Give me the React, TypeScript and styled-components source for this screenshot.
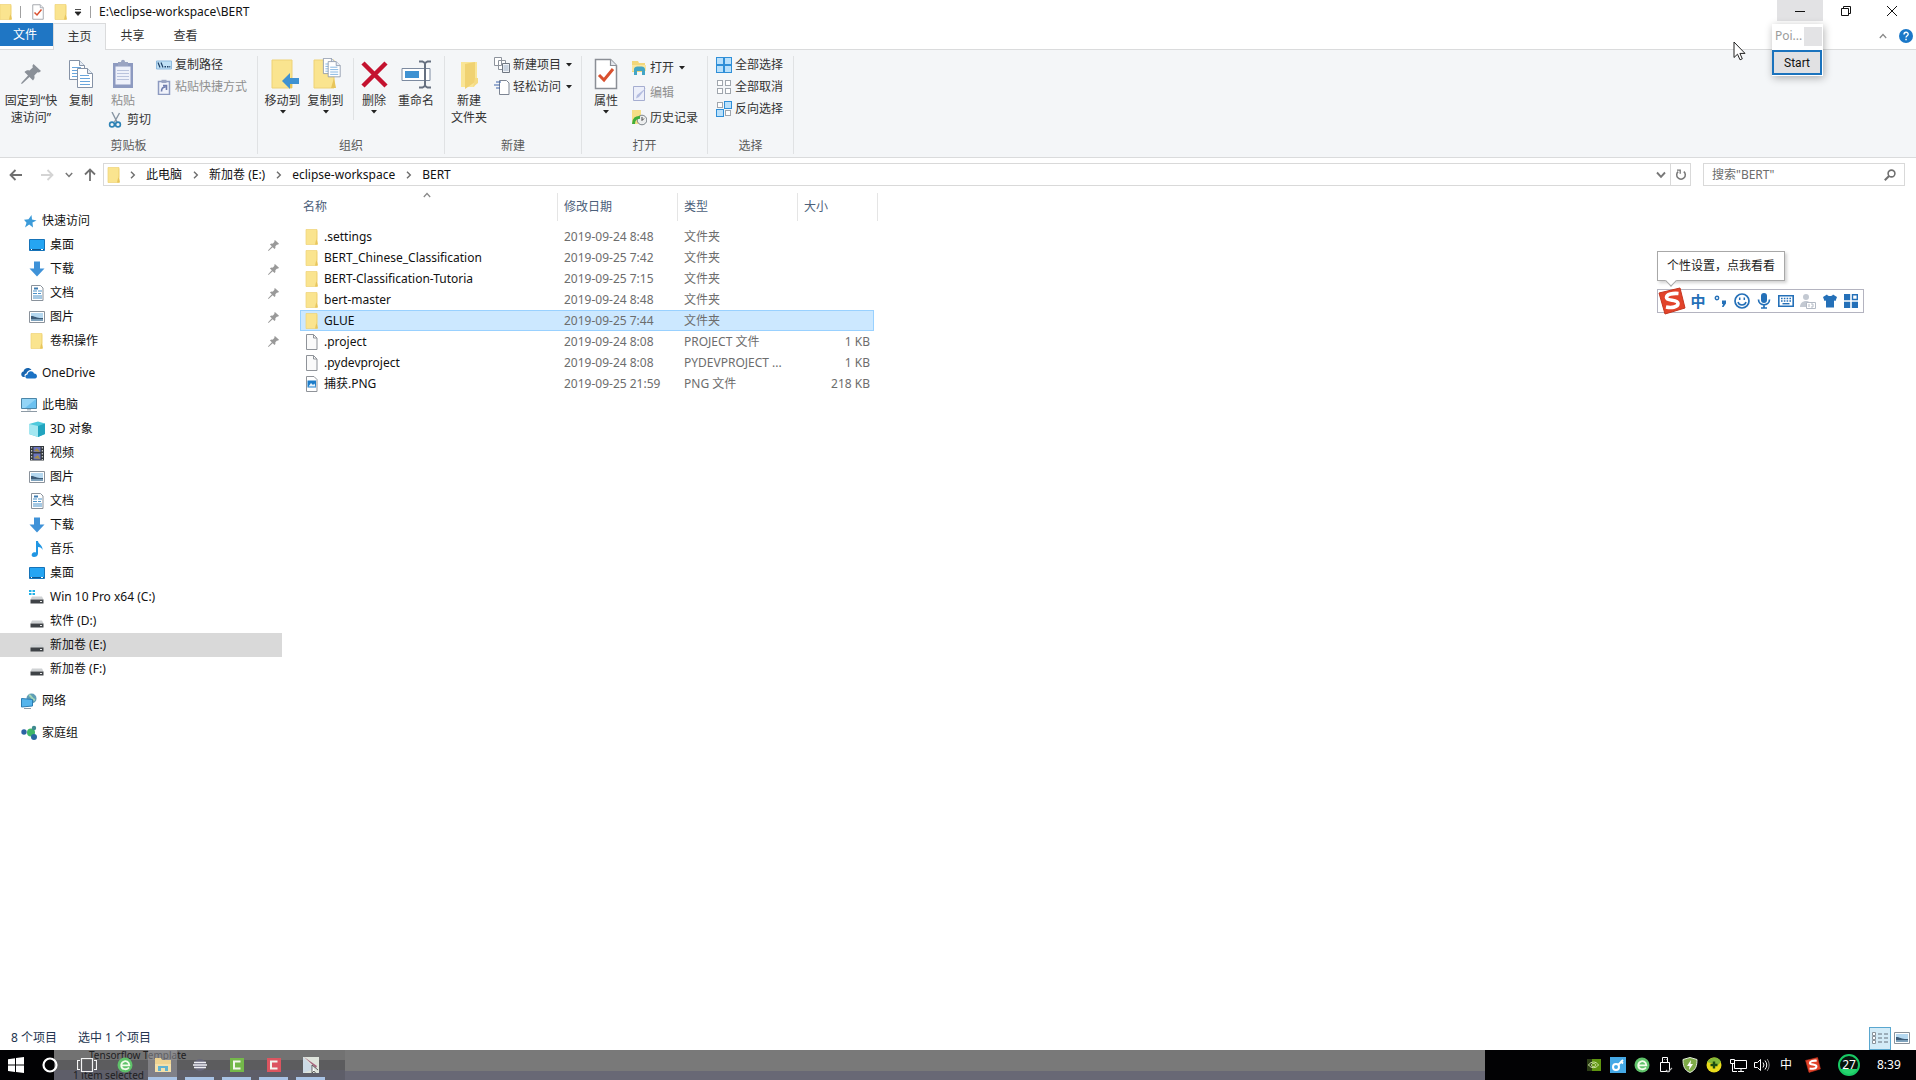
import React from "react";
import styled, { createGlobalStyle, css } from "styled-components";

const Global = createGlobalStyle`
  *, *::before, *::after { box-sizing: border-box; }
  body { margin: 0; background: #fff; }
  body, button, input {
    font-family: "Noto Sans", "Noto Sans CJK SC", sans-serif;
    font-size: 12px;
    line-height: 16px;
    color: #1a1a1a;
  }
  button { border: 0; padding: 0; margin: 0; background: none; }
  svg { display: block; flex: none; }
`;

/* ---------- icons ---------- */

type IconProps = { size?: number };

const Folder = ({ size = 16 }: IconProps) => (
  <svg width={size} height={size} viewBox="0 0 16 16">
    <path d="M2 .5h11v15H2z" fill="#fae48f" />
    <path d="M2 .5h11v15H2z" fill="none" stroke="#eed277" strokeWidth=".7" />
    <path d="M12.500 9l1.500 6.500H11z" fill="#e8c55a" />
    <path d="M12.300 1.500h1v9l-1 1z" fill="#f3d879" />
  </svg>
);

const CheckDoc = ({ size = 16 }: IconProps) => (
  <svg width={size} height={size} viewBox="0 0 32 32">
    <path d="M5.500 1.500h15l6 6v23h-21z" fill="#fff" stroke="#8b8f96" strokeWidth="1.500" />
    <path d="M20.500 1.500v6h6" fill="#e4e8ee" stroke="#8b8f96" strokeWidth="1.200" />
    <path d="M9 17l5 5 9-11" fill="none" stroke="#d9502f" strokeWidth="3" />
  </svg>
);

const Pin = ({ size = 11, color = "#8a9098" }: IconProps & { color?: string }) => (
  <svg width={size} height={size} viewBox="0 0 20 20">
    <path d="M12.500 0L20 7l-2 1.500-1.500-.3-3.200 3.300c.6 2 .2 3.500-1.300 5L8.500 13 1.500 19.500 0 20l.6-1.600L7 11.500 3.500 8c1.500-1.500 3-2 5-1.400l3.300-3.200-.4-1.700z" fill={color} />
  </svg>
);

const Sheet = ({ x, y }: { x: number; y: number }) => (
  <g transform={`translate(${x} ${y})`}>
    <path d="M.5.5h10l5 5v14H.5z" fill="#fff" stroke="#8592a6" />
    <path d="M10.500.5v5h5" fill="#e4ebf4" stroke="#8592a6" />
    <path d="M3 7.500h9M3 10.500h10M3 13.500h10M3 16.500h10" stroke="#6aa6dc" />
  </g>
);

const CopyIcon = () => (
  <svg width="32" height="32" viewBox="0 0 32 32">
    <Sheet x={4} y={2} />
    <Sheet x={12} y={10} />
  </svg>
);

const PasteIcon = () => (
  <svg width="32" height="32" viewBox="0 0 32 32">
    <path d="M6 5h20v25H6z" fill="#8d9ac0" />
    <path d="M8.500 8.500h15v18h-15z" fill="#eef1fa" />
    <path d="M10 12.500h12M10 15.500h12M10 18.500h12M10 21.500h12" stroke="#b9c3dd" />
    <path d="M11 4h3c0-3 4-3 4 0h3v4H11z" fill="#9aa4c2" />
  </svg>
);

const PathIcon = () => (
  <svg width="16" height="16" viewBox="0 0 16 16">
    <path d="M.5 4h15v8H.5z" fill="#bfe0f5" stroke="#8fbbe0" />
    <path d="M2 5.500l2 5M5 5.500l2 5" stroke="#1d3f66" strokeWidth="1.200" />
    <path d="M8.500 9h1.500v1.500H8.500zM11 9h1.500v1.500H11zM13.300 9h1v1.500h-1z" fill="#1d3f66" />
  </svg>
);

const PasteLinkIcon = () => (
  <svg width="16" height="16" viewBox="0 0 16 16">
    <path d="M2.500 2.500h11v13h-11z" fill="#f1f3fb" stroke="#8d9ac0" strokeWidth="1.500" />
    <path d="M5.500.8h5V4h-5z" fill="#9aa4c2" />
    <path d="M5.500 12.500c0-3 1.500-4.500 4-4.500M7 6.500h3.500V11" fill="none" stroke="#6f7dae" strokeWidth="1.600" />
  </svg>
);

const Scissors = () => (
  <svg width="16" height="16" viewBox="0 0 16 16">
    <path d="M4 0l5 10M11.500 1L6.500 10" stroke="#8795a3" strokeWidth="1.400" />
    <circle cx="4" cy="12.500" r="2.400" fill="none" stroke="#2d82b5" strokeWidth="1.600" />
    <circle cx="10" cy="12.500" r="2.400" fill="none" stroke="#2d82b5" strokeWidth="1.600" />
  </svg>
);

const MoveTo = () => (
  <svg width="32" height="32" viewBox="0 0 32 32">
    <path d="M5 2h20v28H5z" fill="#fae48f" stroke="#eed277" />
    <path d="M25 18v12h-3z" fill="#e8c55a" />
    <path d="M15 23l8-8v5h9v6h-9v5z" fill="#3f92d2" />
  </svg>
);

const CopyTo = () => (
  <svg width="32" height="32" viewBox="0 0 32 32">
    <path d="M4 2h20v28H4z" fill="#fae48f" stroke="#eed277" />
    <path d="M24 20l2 10h-5z" fill="#e8c55a" />
    <g transform="translate(13 0) scale(.8)">
      <Sheet x={0} y={0} />
      <Sheet x={6} y={4} />
    </g>
  </svg>
);

const DeleteX = () => (
  <svg width="32" height="32" viewBox="0 0 32 32">
    <path d="M5 5l23 23M28 5L5 28" stroke="#c4122f" strokeWidth="4.500" />
  </svg>
);

const Rename = () => (
  <svg width="32" height="32" viewBox="0 0 32 32">
    <path d="M2 10.500h28v12H2z" fill="#fff" stroke="#7c8aa0" />
    <path d="M5 13h14v7H5z" fill="#3f92d2" />
    <path d="M19 3.500h3.500L25 5l2.500-1.500H31M19 29.500h3.500L25 28l2.500 1.500H31M25 5v23" fill="none" stroke="#667080" strokeWidth="2" />
  </svg>
);

const NewFolder = () => (
  <svg width="32" height="32" viewBox="0 0 32 32">
    <path d="M8 4h16v20l-3 5H8z" fill="#f9e596" />
    <path d="M12 6l10-2v20l-10 7z" fill="#f0d272" />
    <path d="M22 20h3v5l-5 4z" fill="#f5db83" />
  </svg>
);

const NewItem = () => (
  <svg width="16" height="16" viewBox="0 0 16 16">
    <path d="M.5.500h7v8h-7zM4.500 3.500h7v9h-7z" fill="#fff" stroke="#8d939c" />
    <path d="M8.500 6.500h7v9h-7z" fill="#f0f3f7" stroke="#6f7782" />
    <path d="M9.500 9h5M9.500 11h5M9.500 13h5" stroke="#9fb0c6" />
  </svg>
);

const EasyAccess = () => (
  <svg width="16" height="16" viewBox="0 0 16 16">
    <path d="M5.500 1.500h7l2.500 2.500v11.500H5.500z" fill="#fff" stroke="#7d8593" />
    <path d="M2 3h5M0 6h6M2 9h4" stroke="#3c63a8" strokeWidth="1.200" />
  </svg>
);

const OpenIcon = () => (
  <svg width="16" height="16" viewBox="0 0 16 16">
    <path d="M1 1h6l1 2h6v9H1z" fill="#f3d77b" />
    <path d="M1 5h14v6H1z" fill="#f9e6a0" />
    <path d="M3 15V9.500C3 7 5 6.500 8.500 6.500S14 7 14 9.500V15h-3v-4H6v4z" fill="#43a5c5" />
  </svg>
);

const EditIcon = () => (
  <svg width="16" height="16" viewBox="0 0 16 16">
    <path d="M2.500 1.500h11v14h-11z" fill="#eceffa" stroke="#a5add0" />
    <path d="M15 3l-7 9-3 1.500L6 10z" fill="#b4bde0" />
  </svg>
);

const HistoryIcon = () => (
  <svg width="16" height="16" viewBox="0 0 16 16">
    <path d="M1 0h9v14H1z" fill="#f6df86" />
    <circle cx="11" cy="10" r="4.800" fill="#eceeef" stroke="#7e868c" />
    <path d="M11 7v3.500l2-2" fill="none" stroke="#444" />
    <path d="M2.500 14c0-5 3-7 6.500-6.500" fill="none" stroke="#3fae3c" strokeWidth="3" />
  </svg>
);

const squares = [[0.5, 0.5], [8.5, 0.5], [0.5, 8.5], [8.5, 8.5]];
const SelectIcon = ({ filled }: { filled: number[] }) => (
  <svg width="16" height="16" viewBox="0 0 16 16">
    {squares.map(([x, y], i) => {
      const on = filled.includes(i);
      return (
        <rect
          key={i}
          x={on ? x : x + 1}
          y={on ? y : y + 1}
          width={on ? 7 : 5}
          height={on ? 7 : 5}
          fill={on ? "#b9e0fb" : "#fff"}
          stroke={on ? "#2f8fd8" : "#a0a6ad"}
        />
      );
    })}
  </svg>
);

const Star = () => (
  <svg width="16" height="16" viewBox="0 0 16 16">
    <path d="M10.500 2l.5 4.500 4.500 1-4 2 .5 5-3.800-3L4 14.500l1.500-4.700L3 6.800l4.500-.5z" fill="#3c9bd9" />
  </svg>
);

const Desktop = () => (
  <svg width="16" height="16" viewBox="0 0 16 16">
    <path d="M.5 2.500h15v11H.5z" fill="#25a5f3" stroke="#1673b8" />
    <path d="M1 12.500h14" stroke="#0e568f" />
    <path d="M2 12h1v1H2zM12 12h2v1h-2z" fill="#fff" />
  </svg>
);

const Download = () => (
  <svg width="16" height="16" viewBox="0 0 16 16">
    <path d="M5 .5h6v7h4.500L8 15.500.5 7.500H5z" fill="#3f92d8" />
  </svg>
);

const DocIcon = () => (
  <svg width="16" height="16" viewBox="0 0 16 16">
    <path d="M2.500.5h9l2.500 2.500v12.500H2.500z" fill="#fff" stroke="#8a929b" />
    <path d="M4 6h4M9 6h4M4 8.500h4M9 8.500h3M4 11h9M4 13h9" stroke="#4d93c9" />
    <path d="M5 3.500h4" stroke="#3f7cb0" strokeWidth="2" />
  </svg>
);

const PictureIcon = () => (
  <svg width="16" height="16" viewBox="0 0 16 16">
    <path d="M.5 2.500h15v11H.5z" fill="#fff" stroke="#8a929b" />
    <path d="M2 4h12v8H2z" fill="#b5d8f0" />
    <path d="M2 7c4 0 6 2.500 12 2v1.500H2z" fill="#3d5c78" />
    <path d="M2 10.500h12V12H2z" fill="#7fa3bd" />
  </svg>
);

const Cloud = () => (
  <svg width="16" height="16" viewBox="0 0 16 16">
    <path d="M2.500 12C-.5 11.500-.5 7 2.500 6.500 3 3 8 1.500 10.500 5 7 5 6 7 5.500 8.500 3.500 9 3 10.500 4 12z" fill="#1764ae" />
    <path d="M6 13.500c-2.500-.5-2-4 .5-4 .5-4 5.500-4 6.500-1 3.500 0 4 4.500 1 5z" fill="#1b72c4" />
  </svg>
);

const Computer = () => (
  <svg width="16" height="16" viewBox="0 0 16 16">
    <path d="M.5 1.500h15v10H.5z" fill="#6cc1f0" stroke="#4c86a8" />
    <path d="M1 2h14L4 11H1z" fill="#93d5f7" />
    <path d="M0 14.500h16" stroke="#8d9aa5" />
    <path d="M6 12h4v1.500H6z" fill="#b9c4cc" />
  </svg>
);

const Cube = () => (
  <svg width="16" height="16" viewBox="0 0 16 16">
    <path d="M0 3l9-2.500 7 2V13l-7 3-9-3z" fill="#4fc9dc" />
    <path d="M0 3l9 2v11l-9-3z" fill="#a4e7f1" />
    <path d="M9 5l7-2.500V13l-7 3z" fill="#22a4bf" />
  </svg>
);

const Film = () => (
  <svg width="16" height="16" viewBox="0 0 16 16">
    <path d="M1 1h14v14.500H1z" fill="#33383d" />
    <path d="M4.500 2h7v5h-7zM4.500 8.500h7v6h-7z" fill="#6b75c0" />
    <path d="M5 6l3-3 3 4zM5 13l4-3 2 4z" fill="#a58e48" />
    <path d="M2.700 2v13M13.300 2v13" stroke="#e6e8ea" strokeDasharray="1.500 1.500" />
  </svg>
);

const Music = () => (
  <svg width="16" height="16" viewBox="0 0 16 16">
    <path d="M7 0h2c0 3 5 4 4.500 9-.7-2-2-3-4.500-3v6.500C9 15 7 16 5 16s-3-1.500-2-3.200S6 11 7 11.500z" fill="#2196e3" />
  </svg>
);

const Drive = ({ win }: { win?: boolean }) => (
  <svg width="16" height="16" viewBox="0 0 16 16">
    <path d="M3 7.500h10l1.500 3h-13z" fill="#cfd2d4" />
    <path d="M1.500 10.500h13v4h-13z" fill="#3f4347" />
    <path d="M11 12h2v1h-2z" fill="#e9e9e9" />
    {win && <path d="M0 1h2.500v2H0zM3.500 1H6v2H3.500zM0 4h2.500v2H0zM3.500 4H6v2H3.500z" fill="#23b2e8" />}
  </svg>
);

const Network = () => (
  <svg width="16" height="16" viewBox="0 0 16 16">
    <circle cx="10.500" cy="5.500" r="5" fill="#5e9db5" />
    <path d="M8 2c3 1 2 4 6 5" stroke="#a4d6b5" strokeWidth="2" fill="none" />
    <path d="M.5 5.500l11 1v6.500l-11 1z" fill="#54b4ec" stroke="#2c7db3" />
    <path d="M3 15.500h7" stroke="#8d9aa5" />
  </svg>
);

const HomeGroup = () => (
  <svg width="16" height="16" viewBox="0 0 16 16">
    <circle cx="3" cy="7" r="2.700" fill="#2b63a3" />
    <circle cx="10" cy="7.500" r="4" fill="#3fb768" />
    <circle cx="13" cy="3" r="2.200" fill="#3f8a8f" />
    <circle cx="13" cy="12" r="3" fill="#2a69a0" />
  </svg>
);

const BlankFile = () => (
  <svg width="16" height="16" viewBox="0 0 16 16">
    <path d="M2.500.5h7l3.500 3.500v11.500H2.500z" fill="#fafafa" stroke="#8f9399" />
    <path d="M9.500.5V4H13" fill="none" stroke="#8f9399" />
  </svg>
);

const ImageFile = () => (
  <svg width="16" height="16" viewBox="0 0 16 16">
    <path d="M2.500.5h7.500l3 3v12h-10.500z" fill="#fff" stroke="#8f9399" />
    <path d="M3.500 4.500h8.500v7H3.500z" fill="#1c7cc9" />
    <path d="M4.500 10.500l2.500-3.500 2 2 1.500-1.500 1 3z" fill="#e4f2fc" />
  </svg>
);

const ChevronRight = () => (
  <svg width="6" height="8" viewBox="0 0 6 8">
    <path d="M1 .8L4.300 4 1 7.200" fill="none" stroke="#6d6d6d" strokeWidth="1.400" />
  </svg>
);

const ChevronDown = ({ size = 8 }: IconProps) => (
  <svg width={size} height={size} viewBox="0 0 8 8">
    <path d="M.8 2L4 5.500 7.200 2" fill="none" stroke="#777" strokeWidth="1.500" />
  </svg>
);

const ChevronUp = () => (
  <svg width="8" height="6" viewBox="0 0 8 6">
    <path d="M.8 5L4 1.500 7.200 5" fill="none" stroke="#888" strokeWidth="1.200" />
  </svg>
);

const Caret = () => (
  <svg width="6" height="4" viewBox="0 0 6 4">
    <path d="M0 0h6L3 3.500z" fill="#222" />
  </svg>
);

const Arrow = ({ turn = 0, color = "#707070" }: { turn?: number; color?: string }) => (
  <svg width="14" height="14" viewBox="0 0 14 14">
    <path
      transform={`rotate(${turn} 7 7)`}
      d="M13 7H1.800M6.500 2L1.500 7l5 5"
      fill="none"
      stroke={color}
      strokeWidth="1.800"
    />
  </svg>
);

const Refresh = () => (
  <svg width="12" height="12" viewBox="0 0 12 12">
    <path d="M8.800 2.600A4.300 4.300 0 1 1 3.200 2.600" fill="none" stroke="#777" strokeWidth="1.500" />
    <path d="M2 1.200h3.200v3.600" fill="none" stroke="#777" strokeWidth="1.300" />
  </svg>
);

const Magnifier = () => (
  <svg width="12" height="12" viewBox="0 0 12 12">
    <circle cx="7.500" cy="4.500" r="3.400" fill="none" stroke="#707070" strokeWidth="1.600" />
    <path d="M5 7L.8 11.200" stroke="#707070" strokeWidth="2" />
  </svg>
);

/* ---------- window frame ---------- */

const Window = styled.div`
  position: relative;
  display: flex;
  flex-direction: column;
  min-height: 100vh;
  overflow: hidden;
  background: #fff;
`;

const TitleBar = styled.header`
  display: flex;
  align-items: flex-start;
  height: 23px;
  padding-right: 1px;
`;

const QuickBar = styled.div`
  display: flex;
  align-items: center;
  height: 23px;
`;

const QuickButton = styled.button<{ $w: number }>`
  display: flex;
  justify-content: center;
  width: ${(p) => p.$w}px;
`;

const Tick = styled.span`
  width: 1px;
  height: 12px;
  margin: 0 8px;
  background: #a0a0a0;
`;

const Title = styled.h1`
  flex: 1;
  margin: 0;
  font-size: 12px;
  font-weight: 400;
  line-height: 23px;
  color: #111;
`;

const WindowButton = styled.button<{ $hover?: boolean }>`
  display: flex;
  align-items: center;
  justify-content: center;
  width: 46px;
  height: 21px;
  background: ${(p) => (p.$hover ? "#e2e2e4" : "transparent")};
`;

const TabBar = styled.nav`
  display: flex;
  align-items: stretch;
  height: 26px;
`;

const Tab = styled.button<{ $kind?: "file" | "active" }>`
  width: 53px;
  height: 26px;
  color: #333;
  ${(p) =>
    p.$kind === "file" &&
    css`
      height: 23px;
      padding-right: 3px;
      background: #1f76c4;
      color: #fff;
    `}
  ${(p) =>
    p.$kind === "active" &&
    css`
      height: 27px;
      background: #f4f6f8;
      border: 1px solid #dadbdc;
      border-bottom: 0;
      z-index: 1;
    `}
`;

const TabTools = styled.div`
  display: flex;
  align-items: center;
  gap: 12px;
  margin-left: auto;
  padding-right: 3px;
`;

/* ---------- ribbon ---------- */

const Ribbon = styled.section`
  display: flex;
  height: 109px;
  padding: 6px 0 3px;
  background: #f4f6f8;
  border-top: 1px solid #dadbdc;
  border-bottom: 1px solid #dadbdc;
`;

const Group = styled.section<{ $w: number }>`
  display: flex;
  flex-direction: column;
  justify-content: space-between;
  width: ${(p) => p.$w}px;
  border-right: 1px solid #e0e2e4;
`;

const GroupBody = styled.div<{ $indent?: number }>`
  display: flex;
  padding-left: ${(p) => p.$indent ?? 0}px;
`;

const GroupTitle = styled.h2`
  margin: 0;
  font-size: 12px;
  font-weight: 400;
  text-align: center;
  color: #5a5a5a;
`;

const BigButton = styled.button<{ $w: number; $off?: boolean }>`
  display: flex;
  flex-direction: column;
  align-items: center;
  width: ${(p) => p.$w}px;
  color: ${(p) => (p.$off ? "#8f8f8f" : "#333")};
  white-space: nowrap;
`;

const BigIcon = styled.span`
  display: flex;
  align-items: center;
  justify-content: center;
  height: 36px;
`;

const BigLabel = styled.span`
  padding-bottom: 1px;
  line-height: 17px;
`;

const Column = styled.div<{ $gap?: number; $top?: number; $indent?: number }>`
  display: flex;
  flex-direction: column;
  align-items: flex-start;
  gap: ${(p) => p.$gap ?? 0}px;
  padding: ${(p) => p.$top ?? 0}px 0 0 ${(p) => p.$indent ?? 0}px;
`;

const SmallButton = styled.button<{ $off?: boolean }>`
  display: flex;
  align-items: center;
  gap: 3px;
  height: 16px;
  color: ${(p) => (p.$off ? "#8f8f8f" : "#333")};
  white-space: nowrap;
  svg:last-child { margin-left: 2px; }
`;

const InnerRule = styled.span`
  width: 1px;
  height: 62px;
  margin: 2px 2px 0 6px;
  background: #e0e2e4;
`;

/* ---------- address bar ---------- */

const AddressRow = styled.div`
  display: flex;
  align-items: center;
  height: 34px;
  padding: 5px 11px 6px 9px;
`;

const NavButton = styled.button<{ $w: number }>`
  display: flex;
  align-items: center;
  width: ${(p) => p.$w}px;
`;

const AddressBox = styled.div`
  display: flex;
  flex: 1;
  align-items: center;
  height: 23px;
  margin-right: 12px;
  padding-left: 2px;
  border: 1px solid #d9d9d9;
`;

const Crumbs = styled.ol`
  display: flex;
  flex: 1;
  align-items: center;
  margin: 0;
  padding: 0 0 0 8px;
  list-style: none;
`;

const Crumb = styled.li`
  display: flex;
  align-items: center;
  gap: 10px;
  padding-right: 11px;
`;

const CrumbLink = styled.a`
  color: #111;
  text-decoration: none;
`;

const BoxButton = styled.button<{ $line?: boolean }>`
  display: flex;
  align-items: center;
  justify-content: center;
  width: 20px;
  height: 21px;
  border-left: 1px solid ${(p) => (p.$line ? "#d9d9d9" : "transparent")};
`;

const SearchBox = styled.label`
  display: flex;
  align-items: center;
  width: 202px;
  height: 23px;
  padding: 0 8px;
  border: 1px solid #d9d9d9;
`;

const SearchInput = styled.input`
  flex: 1;
  min-width: 0;
  padding: 0;
  border: 0;
  outline: 0;
  background: none;
  &::placeholder { color: #6d6d6d; opacity: 1; }
`;

/* ---------- content ---------- */

const Content = styled.div`
  display: flex;
  flex: 1;
`;

const Sidebar = styled.nav`
  width: 282px;
  padding-top: 17px;
`;

const Section = styled.div`
  margin-bottom: 8px;
`;

const SideRow = styled.a<{ $deep?: boolean; $on?: boolean }>`
  display: flex;
  align-items: center;
  gap: 5px;
  height: 24px;
  padding: 0 3px 0 ${(p) => (p.$deep ? 29 : 21)}px;
  background: ${(p) => (p.$on ? "#d9d9d9" : "transparent")};
  color: #111;
  text-decoration: none;
`;

const PinSlot = styled.span`
  margin-left: auto;
`;

const Main = styled.main`
  flex: 1;
  padding: 1px 0 0 18px;
`;

const FileTable = styled.table`
  width: 578px;
  border-collapse: separate;
  border-spacing: 0;
  table-layout: fixed;
`;

const Col = styled.col<{ $w: number }>`
  width: ${(p) => p.$w}px;
`;

const HeadCell = styled.th`
  position: relative;
  height: 28px;
  padding: 0 0 0 6px;
  border-right: 1px solid #e5e5e5;
  font-weight: 400;
  text-align: left;
  color: #4c607a;
  &:first-child { padding-left: 3px; }
`;

const SortMark = styled.span`
  position: absolute;
  top: -1px;
  left: calc(50% - 6px);
`;

const Cell = styled.td<{ $right?: boolean }>`
  height: 21px;
  padding: 0 4px 0 6px;
  border: 0 solid transparent;
  border-width: 1px 0;
  line-height: 16px;
  color: #6d6d6d;
  white-space: nowrap;
  overflow: hidden;
  text-overflow: ellipsis;
  text-align: ${(p) => (p.$right ? "right" : "left")};
  &:first-child { padding-left: 4px; }
  &:last-child { padding: 0; }
`;

const FileRow = styled.tr<{ $on?: boolean }>`
  ${(p) =>
    p.$on &&
    css`
      ${Cell}:not(:last-child) { background: #cce8ff; border-color: #99d1ff; }
      ${Cell}:first-child { border-left-width: 1px; padding-left: 3px; }
      ${Cell}:nth-child(4) { border-right-width: 1px; padding-right: 3px; }
    `}
`;

const FileName = styled.span`
  display: flex;
  align-items: center;
  gap: 4px;
  color: #111;
`;

const Spacer = styled.tr`
  height: 5px;
`;

const StatusBar = styled.footer`
  display: flex;
  align-items: center;
  gap: 21px;
  height: 24px;
  padding: 0 3px 0 11px;
  color: #23344f;
`;

const ViewButtons = styled.div`
  display: flex;
  margin-left: auto;
`;

const ViewButton = styled.button<{ $on?: boolean }>`
  display: flex;
  align-items: center;
  justify-content: center;
  width: 22px;
  height: 23px;
  border: 1px solid ${(p) => (p.$on ? "#5aa7cf" : "transparent")};
  background: ${(p) => (p.$on ? "#d3ebf7" : "transparent")};
`;

/* ---------- taskbar ---------- */

const Taskbar = styled.footer`
  position: relative;
  display: flex;
  height: 30px;
  background: #020204;
  color: #fff;
`;

const Glass = styled.div`
  position: absolute;
  inset: 0 431px 0 54px;
  background: linear-gradient(#797979 21px, #686875 21px);
`;

const GlassPanel = styled.div`
  display: flex;
  flex-direction: column;
  justify-content: space-between;
  width: 291px;
  height: 30px;
  padding-left: 19px;
  background: linear-gradient(#727272 10px, #5c5c5e 10px, #5c5c5e 20px, #5e5e69 20px);
`;

const GhostText = styled.span<{ $indent: number }>`
  padding-left: ${(p) => p.$indent}px;
  font-size: 10px;
  line-height: 10px;
  color: #202022;
`;

const Launchers = styled.div`
  position: relative;
  display: flex;
`;

const TaskButton = styled.button<{ $open?: boolean; $active?: boolean; $w?: number }>`
  display: flex;
  align-items: center;
  justify-content: center;
  width: ${(p) => p.$w ?? 37}px;
  height: 30px;
  padding: 0 4px;
  background: linear-gradient(
      to top,
      ${(p) => (p.$open ? "#a9c3e6" : "transparent")} 3px,
      ${(p) => (p.$active ? "rgba(170, 170, 176, 0.45)" : "transparent")} 3px
    )
    content-box;
  & > svg { align-self: center; }
`;

const TaskFace = styled.span`
  display: flex;
  align-items: center;
  justify-content: center;
  height: 30px;
`;

const Tray = styled.div`
  position: relative;
  display: flex;
  align-items: center;
  margin-left: auto;
`;

const TrayItem = styled.button<{ $wide?: boolean }>`
  display: flex;
  align-items: center;
  justify-content: center;
  width: ${(p) => (p.$wide ? 30 : 24)}px;
  height: 30px;
  color: #fff;
`;

const Badge = styled.span`
  display: flex;
  align-items: center;
  justify-content: center;
  width: 22px;
  height: 22px;
  margin: 0 17px 0 10px;
  border: 2px solid #18c964;
  border-radius: 50%;
  background: linear-gradient(#06140c 72%, #27d56f 72%);
`;

const Clock = styled.time`
  width: 39px;
`;

/* ---------- floating windows ---------- */

const Popup = styled.section`
  position: absolute;
  top: 24px;
  right: 93px;
  width: 51px;
  background: #fff;
  box-shadow: 1px 2px 8px rgba(0, 0, 0, 0.3);
`;

const PopupTitle = styled.div`
  display: flex;
  align-items: center;
  justify-content: space-between;
  height: 26px;
  padding: 0 1px 2px 3px;
  color: #9b9b9b;
`;

const PopupClose = styled.button`
  width: 18px;
  height: 19px;
  background: #e3e3e5;
`;

const StartButton = styled.button`
  display: block;
  width: 50px;
  height: 25px;
  margin: 0 0 1px;
  border: 2px solid #1b73bd;
  background: #e1e1e3;
  color: #111;
  font-family: Roboto, "Liberation Sans", sans-serif;
  font-size: 12px;
`;

const Pointer = styled.div`
  position: absolute;
  top: 41px;
  right: 170px;
`;

const Ime = styled.section`
  position: absolute;
  top: 251px;
  right: 52px;
  width: 207px;
`;

const ImeTip = styled.div`
  position: relative;
  width: 128px;
  height: 30px;
  border: 1px solid #a8a8a8;
  background: #fff;
  box-shadow: 2px 2px 3px rgba(0, 0, 0, 0.18);
  line-height: 28px;
  text-align: center;
  color: #222;
  &::after {
    content: "";
    position: absolute;
    left: 9px;
    bottom: -5px;
    width: 8px;
    height: 8px;
    border: solid #a8a8a8;
    border-width: 0 1px 1px 0;
    background: #fff;
    transform: rotate(45deg);
  }
`;

const ImeBar = styled.div`
  display: flex;
  align-items: center;
  height: 24px;
  margin-top: 8px;
  border: 1px solid #b4b4c0;
  background: #fff;
`;

const ImeKey = styled.button<{ $w?: number }>`
  display: flex;
  align-items: center;
  justify-content: center;
  width: ${(p) => p.$w ?? 22}px;
  color: #2470b8;
  font-size: 15px;
  font-weight: 700;
`;

/* ---------- data ---------- */

type SideItem = { icon: React.ReactNode; text: string; pinned?: boolean; on?: boolean };
type SideGroup = { head: SideItem; items: SideItem[] };

const sideGroups: SideGroup[] = [
  {
    head: { icon: <Star />, text: "快速访问" },
    items: [
      { icon: <Desktop />, text: "桌面", pinned: true },
      { icon: <Download />, text: "下载", pinned: true },
      { icon: <DocIcon />, text: "文档", pinned: true },
      { icon: <PictureIcon />, text: "图片", pinned: true },
      { icon: <Folder />, text: "卷积操作", pinned: true },
    ],
  },
  { head: { icon: <Cloud />, text: "OneDrive" }, items: [] },
  {
    head: { icon: <Computer />, text: "此电脑" },
    items: [
      { icon: <Cube />, text: "3D 对象" },
      { icon: <Film />, text: "视频" },
      { icon: <PictureIcon />, text: "图片" },
      { icon: <DocIcon />, text: "文档" },
      { icon: <Download />, text: "下载" },
      { icon: <Music />, text: "音乐" },
      { icon: <Desktop />, text: "桌面" },
      { icon: <Drive win />, text: "Win 10 Pro x64 (C:)" },
      { icon: <Drive />, text: "软件 (D:)" },
      { icon: <Drive />, text: "新加卷 (E:)", on: true },
      { icon: <Drive />, text: "新加卷 (F:)" },
    ],
  },
  { head: { icon: <Network />, text: "网络" }, items: [] },
  { head: { icon: <HomeGroup />, text: "家庭组" }, items: [] },
];

const files = [
  { icon: <Folder />, name: ".settings", date: "2019-09-24 8:48", type: "文件夹", size: "" },
  { icon: <Folder />, name: "BERT_Chinese_Classification", date: "2019-09-25 7:42", type: "文件夹", size: "" },
  { icon: <Folder />, name: "BERT-Classification-Tutoria", date: "2019-09-25 7:15", type: "文件夹", size: "" },
  { icon: <Folder />, name: "bert-master", date: "2019-09-24 8:48", type: "文件夹", size: "" },
  { icon: <Folder />, name: "GLUE", date: "2019-09-25 7:44", type: "文件夹", size: "", on: true },
  { icon: <BlankFile />, name: ".project", date: "2019-09-24 8:08", type: "PROJECT 文件", size: "1 KB" },
  { icon: <BlankFile />, name: ".pydevproject", date: "2019-09-24 8:08", type: "PYDEVPROJECT ...", size: "1 KB" },
  { icon: <ImageFile />, name: "捕获.PNG", date: "2019-09-25 21:59", type: "PNG 文件", size: "218 KB" },
];

const crumbs = ["此电脑", "新加卷 (E:)", "eclipse-workspace", "BERT"];

/* ---------- parts ---------- */

const Big = (p: { w: number; icon: React.ReactNode; lines: string[]; menu?: boolean; off?: boolean }) => (
  <BigButton $w={p.w} $off={p.off} disabled={p.off}>
    <BigIcon>{p.icon}</BigIcon>
    <BigLabel>
      {p.lines.map((l, i) => (
        <React.Fragment key={l}>
          {i > 0 && <br />}
          {l}
        </React.Fragment>
      ))}
    </BigLabel>
    {p.menu && <Caret />}
  </BigButton>
);

const Small = (p: { icon: React.ReactNode; text: string; menu?: boolean; off?: boolean }) => (
  <SmallButton $off={p.off} disabled={p.off}>
    {p.icon}
    <span>{p.text}</span>
    {p.menu && <Caret />}
  </SmallButton>
);

const SogouS = ({ size = 28 }: IconProps) => (
  <svg width={size} height={size} viewBox="0 0 28 28">
    <path d="M1 6L22 1l5 20-20 6z" fill="#e2432a" stroke="#c5351f" />
    <path d="M20.500 6.500C15 6 8.500 7 8.500 10.500c0 4 11.500 1.500 11.500 6 0 4-7 4.500-12 3.500" fill="none" stroke="#fff" strokeWidth="3.600" />
  </svg>
);

const GreenE = () => (
  <svg width="16" height="16" viewBox="0 0 16 16">
    <circle cx="8" cy="8" r="7.500" fill="#5fc26a" />
    <path d="M4 8.300h8.300C12 4.500 8.800 3.500 6.500 4.700 3.300 6.300 3.500 11 7 12c2 .6 4-.1 5-1.500" fill="none" stroke="#f2fbe9" strokeWidth="1.800" />
  </svg>
);

const Camtasia = ({ color }: { color: string }) => (
  <svg width="14" height="14" viewBox="0 0 14 14">
    <path d="M0 0h14v14H0z" fill={color} />
    <path d="M10.500 3.500H4v7h6.500" fill="none" stroke="#f3f6ee" strokeWidth="2" />
  </svg>
);

const TitleRow = () => (
  <TitleBar>
    <QuickBar>
      <QuickButton $w={12} aria-label="窗口"><Folder /></QuickButton>
      <Tick />
      <QuickButton $w={18} aria-label="属性"><CheckDoc /></QuickButton>
      <QuickButton $w={27} aria-label="新建文件夹"><Folder /></QuickButton>
      <QuickButton $w={8} aria-label="自定义">
        <svg width="8" height="8" viewBox="0 0 8 8">
          <path d="M1 1.500h6M1 4h6L4 7.500z" stroke="#222" strokeWidth=".8" fill="#222" />
        </svg>
      </QuickButton>
      <Tick />
    </QuickBar>
    <Title>E:\eclipse-workspace\BERT</Title>
    <WindowButton $hover aria-label="最小化">
      <svg width="10" height="10" viewBox="0 0 10 10"><path d="M0 5.500h10" stroke="#111" /></svg>
    </WindowButton>
    <WindowButton aria-label="还原">
      <svg width="10" height="10" viewBox="0 0 10 10">
        <path d="M.5 2.500h7v7h-7zM2.500 2.500v-2h7v7h-2" fill="none" stroke="#111" />
      </svg>
    </WindowButton>
    <WindowButton aria-label="关闭">
      <svg width="10" height="10" viewBox="0 0 10 10"><path d="M0 0l10 10M10 0L0 10" stroke="#111" /></svg>
    </WindowButton>
  </TitleBar>
);

const RibbonRow = () => (
  <Ribbon>
    <Group $w={258}>
      <GroupBody>
        <Big w={62} icon={<Pin size={20} />} lines={["固定到“快", "速访问”"]} />
        <Big w={38} icon={<CopyIcon />} lines={["复制"]} />
        <Column $gap={2} $indent={8}>
          <Big w={30} icon={<PasteIcon />} lines={["粘贴"]} off />
          <Small icon={<Scissors />} text="剪切" />
        </Column>
        <Column $gap={6} $top={1} $indent={5}>
          <Small icon={<PathIcon />} text="复制路径" />
          <Small icon={<PasteLinkIcon />} text="粘贴快捷方式" off />
        </Column>
      </GroupBody>
      <GroupTitle>剪贴板</GroupTitle>
    </Group>
    <Group $w={187}>
      <GroupBody $indent={3}>
        <Big w={43} icon={<MoveTo />} lines={["移动到"]} menu />
        <Big w={43} icon={<CopyTo />} lines={["复制到"]} menu />
        <InnerRule />
        <Big w={36} icon={<DeleteX />} lines={["删除"]} menu />
        <Big w={48} icon={<Rename />} lines={["重命名"]} />
      </GroupBody>
      <GroupTitle>组织</GroupTitle>
    </Group>
    <Group $w={137}>
      <GroupBody $indent={2}>
        <Big w={44} icon={<NewFolder />} lines={["新建", "文件夹"]} />
        <Column $gap={6} $top={1} $indent={3}>
          <Small icon={<NewItem />} text="新建项目" menu />
          <Small icon={<EasyAccess />} text="轻松访问" menu />
        </Column>
      </GroupBody>
      <GroupTitle>新建</GroupTitle>
    </Group>
    <Group $w={126}>
      <GroupBody $indent={2}>
        <Big w={44} icon={<CheckDoc size={32} />} lines={["属性"]} menu />
        <Column $gap={9} $top={4} $indent={3}>
          <Small icon={<OpenIcon />} text="打开" menu />
          <Small icon={<EditIcon />} text="编辑" off />
          <Small icon={<HistoryIcon />} text="历史记录" />
        </Column>
      </GroupBody>
      <GroupTitle>打开</GroupTitle>
    </Group>
    <Group $w={86}>
      <GroupBody>
        <Column $gap={6} $top={1} $indent={8}>
          <Small icon={<SelectIcon filled={[0, 1, 2, 3]} />} text="全部选择" />
          <Small icon={<SelectIcon filled={[]} />} text="全部取消" />
          <Small icon={<SelectIcon filled={[1, 2]} />} text="反向选择" />
        </Column>
      </GroupBody>
      <GroupTitle>选择</GroupTitle>
    </Group>
  </Ribbon>
);

const SideBar = () => (
  <Sidebar>
    {sideGroups.map((g) => (
      <Section key={g.head.text}>
        <SideRow href="#">{g.head.icon}{g.head.text}</SideRow>
        {g.items.map((it) => (
          <SideRow href="#" $deep $on={it.on} key={it.text}>
            {it.icon}
            {it.text}
            {it.pinned && <PinSlot><Pin color="#999" /></PinSlot>}
          </SideRow>
        ))}
      </Section>
    ))}
  </Sidebar>
);

const Files = () => (
  <FileTable>
    <colgroup>
      <Col $w={258} />
      <Col $w={120} />
      <Col $w={120} />
      <Col $w={76} />
      <Col $w={4} />
    </colgroup>
    <thead>
      <tr>
        <HeadCell>名称<SortMark><ChevronUp /></SortMark></HeadCell>
        <HeadCell>修改日期</HeadCell>
        <HeadCell>类型</HeadCell>
        <HeadCell colSpan={2}>大小</HeadCell>
      </tr>
    </thead>
    <tbody>
      <Spacer />
      {files.map((f) => (
        <FileRow key={f.name} $on={f.on}>
          <Cell><FileName>{f.icon}{f.name}</FileName></Cell>
          <Cell>{f.date}</Cell>
          <Cell>{f.type}</Cell>
          <Cell $right>{f.size}</Cell>
          <Cell />
        </FileRow>
      ))}
    </tbody>
  </FileTable>
);

const TaskbarRow = () => (
  <Taskbar>
    <Glass>
      <GlassPanel>
        <GhostText $indent={16}>Tensorflow Template</GhostText>
        <GhostText $indent={0}>1 item selected</GhostText>
      </GlassPanel>
    </Glass>
    <Launchers>
      <TaskButton $w={31} aria-label="开始">
        <TaskFace>
          <svg width="16" height="16" viewBox="0 0 16 16">
            <path d="M0 2.200L7 1.200v6.400H0zM8 1l8-1v7.600H8zM0 8.500h7v6.400l-7-1zM8 8.500h8V16l-8-1z" fill="#fff" />
          </svg>
        </TaskFace>
      </TaskButton>
      <TaskButton aria-label="Cortana">
        <TaskFace>
          <svg width="16" height="16" viewBox="0 0 16 16"><circle cx="8" cy="8" r="6.500" fill="none" stroke="#fff" strokeWidth="2.200" /></svg>
        </TaskFace>
      </TaskButton>
      <TaskButton aria-label="任务视图">
        <TaskFace>
          <svg width="20" height="16" viewBox="0 0 20 16">
            <path d="M4.500 1.500h11v13h-11zM3 3.500H.5v9H3M17 3.500h2.500v9H17" fill="none" stroke="#f4f4f4" strokeWidth="1.200" />
          </svg>
        </TaskFace>
      </TaskButton>
      <TaskButton $w={39} aria-label="浏览器"><TaskFace><GreenE /></TaskFace></TaskButton>
      <TaskButton $open $active aria-label="文件资源管理器">
        <TaskFace>
          <svg width="16" height="14" viewBox="0 0 16 14">
            <path d="M0 0h6l1 2h9v12H0z" fill="#eed391" />
            <path d="M0 6h16v8H0z" fill="#f4e0aa" />
            <path d="M3 13V8h10v5h-3v-3H6v3z" fill="#62b2d0" />
          </svg>
        </TaskFace>
      </TaskButton>
      <TaskButton $open aria-label="Eclipse">
        <TaskFace>
          <svg width="14" height="14" viewBox="0 0 14 14">
            <circle cx="7" cy="7" r="6" fill="#67677a" />
            <path d="M1 4.500h12M0 7h14M1 9.500h12" stroke="#f0f0f4" strokeWidth="1.300" />
          </svg>
        </TaskFace>
      </TaskButton>
      <TaskButton $open aria-label="Camtasia"><TaskFace><Camtasia color="#74b84a" /></TaskFace></TaskButton>
      <TaskButton $open aria-label="录制"><TaskFace><Camtasia color="#dc5560" /></TaskFace></TaskButton>
      <TaskButton $open aria-label="指针">
        <TaskFace>
          <svg width="16" height="16" viewBox="0 0 16 16">
            <path d="M0 0h16v16H0z" fill="#dfe4dc" />
            <path d="M0 0l12 12-12 4z" fill="#cddbe6" />
            <path d="M1 0l13 9-1 2z" fill="#a7667f" />
            <path d="M9 8v8l2-2 1.500 2M9 8l6 5" fill="#fff" stroke="#444" strokeWidth=".8" />
          </svg>
        </TaskFace>
      </TaskButton>
    </Launchers>
    <Tray>
      <TrayItem aria-label="NVIDIA">
        <svg width="14" height="12" viewBox="0 0 14 12">
          <path d="M0 0h14v12H0z" fill="#5f9410" />
          <path d="M0 0h5v12H0z" fill="#2b3d15" />
          <path d="M1.500 6C4 2 9 2 11.500 6 9 9.500 4 9.500 1.500 6zM4 6c1-2 4-2 5 0-1 2-4 2-5 0" fill="none" stroke="#cfe5a4" />
        </svg>
      </TrayItem>
      <TrayItem aria-label="密钥">
        <svg width="16" height="16" viewBox="0 0 16 16">
          <path d="M0 0h16v16H0z" fill="#45a9e6" />
          <circle cx="6" cy="10" r="3" fill="none" stroke="#fff" strokeWidth="2" />
          <path d="M8 8l5-5M10.500 4l2.500 2.500" stroke="#fff" strokeWidth="1.800" />
        </svg>
      </TrayItem>
      <TrayItem aria-label="浏览器"><GreenE /></TrayItem>
      <TrayItem aria-label="USB">
        <svg width="14" height="16" viewBox="0 0 14 16">
          <path d="M3.500 5.500v-5h5v5M1.500 5.500h9v9h-9zM5 2.500h.5M7 2.500h.5" fill="none" stroke="#fff" />
          <path d="M7 13l2 2 4-4" fill="none" stroke="#bbb" strokeWidth="1.200" />
        </svg>
      </TrayItem>
      <TrayItem aria-label="安全">
        <svg width="16" height="16" viewBox="0 0 16 16">
          <path d="M8 .5l7 2c0 6-1 10.500-7 13-6-2.500-7-7-7-13z" fill="#7fab48" stroke="#e4eddb" />
          <path d="M9 3L5 9h2.500L7 13l4-6H8.500z" fill="#fff" />
        </svg>
      </TrayItem>
      <TrayItem aria-label="加速">
        <svg width="16" height="16" viewBox="0 0 16 16">
          <circle cx="8" cy="8" r="7.500" fill="#e9dc1c" />
          <path d="M1 5c4-6 12-6 14 0l-3 3z" fill="#83b93a" />
          <path d="M8 4.500v7M4.500 8h7" stroke="#1c4c12" strokeWidth="2.400" />
        </svg>
      </TrayItem>
      <TrayItem aria-label="网络">
        <svg width="17" height="15" viewBox="0 0 17 15">
          <path d="M4.500 2.500h12v8h-12zM8 13.500h6M11 10.500v3M.5 1.500h4v4h-4zM2.500 5.500v8H7" fill="none" stroke="#fff" />
        </svg>
      </TrayItem>
      <TrayItem aria-label="音量">
        <svg width="16" height="14" viewBox="0 0 16 14">
          <path d="M.5 4.500h3l3-3v11l-3-3h-3zM9 4.500q2 2.500 0 5M11 2.500q3.500 4.500 0 9" fill="none" stroke="#fff" />
          <path d="M13.200 1q4 6 0 12" fill="none" stroke="#888" />
        </svg>
      </TrayItem>
      <TrayItem>中</TrayItem>
      <TrayItem $wide aria-label="搜狗"><SogouS size={16} /></TrayItem>
      <Badge>27</Badge>
      <Clock>8:39</Clock>
    </Tray>
  </Taskbar>
);

const ImeWindow = () => (
  <Ime>
    <ImeTip>个性设置，点我看看</ImeTip>
    <ImeBar>
      <ImeKey $w={28} aria-label="搜狗"><SogouS /></ImeKey>
      <ImeKey $w={24}>中</ImeKey>
      <ImeKey $w={21} aria-label="标点">
        <svg width="14" height="12" viewBox="0 0 14 12">
          <circle cx="3" cy="3" r="1.700" fill="none" stroke="#2470b8" strokeWidth="1.400" />
          <path d="M8 5.500h4v3L9.500 12H8l1-3H8z" fill="#2470b8" />
        </svg>
      </ImeKey>
      <ImeKey aria-label="表情">
        <svg width="16" height="16" viewBox="0 0 16 16">
          <circle cx="8" cy="8" r="7" fill="none" stroke="#2470b8" strokeWidth="1.700" />
          <path d="M5.700 4.500V7M10.300 4.500V7M4 9c1 4 7 4 8 0" fill="none" stroke="#2470b8" strokeWidth="1.500" />
        </svg>
      </ImeKey>
      <ImeKey aria-label="语音">
        <svg width="14" height="16" viewBox="0 0 14 16">
          <rect x="4" y="0" width="6" height="10" rx="3" fill="#2470b8" />
          <path d="M1.500 6.500c0 7 11 7 11 0M7 12v3M4 15h6" fill="none" stroke="#2470b8" strokeWidth="1.700" />
        </svg>
      </ImeKey>
      <ImeKey aria-label="键盘">
        <svg width="16" height="12" viewBox="0 0 16 12">
          <path d="M.8.8h14.400v10.400H.8z" fill="none" stroke="#2470b8" strokeWidth="1.600" />
          <path d="M3 3.500h10M3 6h10" stroke="#2470b8" strokeWidth="1.400" strokeDasharray="1.600 1.200" />
          <path d="M4.500 8.700h7" stroke="#2470b8" strokeWidth="1.400" />
        </svg>
      </ImeKey>
      <ImeKey aria-label="登录">
        <svg width="16" height="16" viewBox="0 0 16 16">
          <circle cx="6" cy="4" r="3" fill="#c3c9d2" />
          <path d="M0 14c0-8 12-8 12 0z" fill="#c3c9d2" />
          <path d="M6.500 9.500h9v6h-9zM9 11v3M11 11h2v3h-2" fill="#fff" stroke="#b3bac5" />
        </svg>
      </ImeKey>
      <ImeKey $w={21} aria-label="皮肤">
        <svg width="14" height="14" viewBox="0 0 14 14">
          <path d="M4 .5c1 2 5 2 6 0L14 3l-1.500 4-1.500-.5v7H3v-7L1.500 7 0 3z" fill="#2470b8" />
        </svg>
      </ImeKey>
      <ImeKey aria-label="工具箱">
        <svg width="14" height="14" viewBox="0 0 14 14">
          <path d="M0 0h6.200v6.200H0zM0 7.800h6.200V14H0zM7.800 7.800H14V14H7.800z" fill="#2470b8" />
          <path d="M8.500.7h4.800v4.800H8.500z" fill="none" stroke="#2470b8" strokeWidth="1.400" />
        </svg>
      </ImeKey>
    </ImeBar>
  </Ime>
);

export default function App() {
  return (
    <Window>
      <Global />
      <TitleRow />
      <TabBar>
        <Tab $kind="file">文件</Tab>
        <Tab $kind="active">主页</Tab>
        <Tab>共享</Tab>
        <Tab>查看</Tab>
        <TabTools>
          <ChevronUp />
          <svg width="14" height="14" viewBox="0 0 14 14">
            <circle cx="7" cy="7" r="7" fill="#1b78c8" />
            <path d="M5 5.500c0-3 4.200-3 4.200-.3C9.200 6.700 7 6.800 7 8.500" fill="none" stroke="#fff" strokeWidth="1.400" />
            <path d="M6.300 9.700h1.500v1.500H6.300z" fill="#fff" />
          </svg>
        </TabTools>
      </TabBar>
      <RibbonRow />
      <AddressRow>
        <NavButton $w={31} aria-label="后退"><Arrow /></NavButton>
        <NavButton $w={25} aria-label="前进"><Arrow turn={180} color="#d4d4d4" /></NavButton>
        <NavButton $w={18} aria-label="最近"><ChevronDown /></NavButton>
        <NavButton $w={20} aria-label="上移"><Arrow turn={90} /></NavButton>
        <AddressBox>
          <Folder />
          <Crumbs>
            {crumbs.map((c) => (
              <Crumb key={c}>
                <ChevronRight />
                <CrumbLink href="#">{c}</CrumbLink>
              </Crumb>
            ))}
          </Crumbs>
          <BoxButton aria-label="历史"><ChevronDown size={10} /></BoxButton>
          <BoxButton $line aria-label="刷新"><Refresh /></BoxButton>
        </AddressBox>
        <SearchBox>
          <SearchInput aria-label="搜索" placeholder={'搜索"BERT"'} />
          <Magnifier />
        </SearchBox>
      </AddressRow>
      <Content>
        <SideBar />
        <Main><Files /></Main>
      </Content>
      <StatusBar>
        <span>8 个项目</span>
        <span>选中 1 个项目</span>
        <ViewButtons>
          <ViewButton $on aria-label="详细信息">
            <svg width="16" height="14" viewBox="0 0 16 14">
              <path d="M.5 1.500h3v3h-3zM.5 5.500h3v3h-3zM.5 9.500h3v3h-3z" fill="#fff" stroke="#8a929b" />
              <path d="M6 3h4M12 3h4M6 7h4M12 7h4M6 11h4M12 11h4" stroke="#66717d" />
            </svg>
          </ViewButton>
          <ViewButton aria-label="大图标"><PictureIcon /></ViewButton>
        </ViewButtons>
      </StatusBar>
      <TaskbarRow />
      <Popup>
        <PopupTitle>Poi...<PopupClose aria-label="关闭" /></PopupTitle>
        <StartButton>Start</StartButton>
      </Popup>
      <ImeWindow />
      <Pointer>
        <svg width="13" height="20" viewBox="0 0 13 20">
          <path d="M1 1v15.500l3.500-3.300L7 18.800l2.300-1-2.400-5.400H12z" fill="#fff" stroke="#222" />
        </svg>
      </Pointer>
    </Window>
  );
}
